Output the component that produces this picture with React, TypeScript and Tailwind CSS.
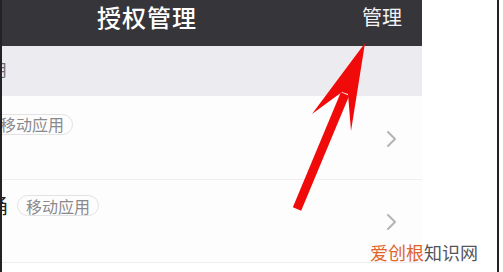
import React from "react";

const Chevron = () => (
  <svg width="11" height="18" viewBox="0 0 11 18" fill="none">
    <polyline points="2,2 9,9 2,16" stroke="#b4b4b8" strokeWidth="2" strokeLinecap="round" strokeLinejoin="round" />
  </svg>
);

const Pill = () => (
  <span className="inline-flex items-center h-[21px] px-[8px] rounded-full border border-[#e2e2e4] text-[16px] leading-none text-[#8a8a8e]">
    移动应用
  </span>
);

export default function App() {
  return (
    <div
      className="relative w-[503px] h-[272px] overflow-hidden bg-white flex"
      style={{ fontFamily: '"Noto Sans CJK SC", "Noto Sans", sans-serif' }}
    >
      <div className="w-[2px] h-full bg-[#222226]" />
      <div className="w-[420px] h-full flex flex-col overflow-hidden">
        <div className="h-[46px] bg-[#36353a] flex items-start pt-[5px] pl-[95px] pr-[20px]">
          <span className="text-[24px] leading-[24px] text-white font-medium tracking-[1px]">授权管理</span>
          <span className="ml-auto mt-[2px] text-[20px] leading-[20px] text-[#f2f2f2]">管理</span>
        </div>
        <div className="h-[50px] bg-[#ececf0] flex items-start pt-[15px]">
          <span className="-ml-[11px] text-[16px] leading-[16px] text-[#6a6a6e]">用</span>
        </div>
        <div className="h-[84px] bg-[#fdfdfd] border-b border-[#efeff1] flex items-center pr-[25px]">
          <div className="self-start pt-[16px] -ml-[11px]">
            <Pill />
          </div>
          <div className="ml-auto mt-[2px]">
            <Chevron />
          </div>
        </div>
        <div className="h-[83px] bg-[#fdfdfd] border-b border-[#efeff1] flex items-center pr-[25px]">
          <div className="self-start pt-[15px] -ml-[14px] flex items-center gap-[9px]">
            <span className="text-[20px] leading-[21px] text-[#222]">俑</span>
            <Pill />
          </div>
          <div className="ml-auto mt-[2px]">
            <Chevron />
          </div>
        </div>
        <div className="flex-1 bg-white" />
      </div>
      <div className="w-[75px] h-full bg-white" />
      <div className="w-[2px] h-full bg-[#222226]" />
      <div className="flex-1 h-full bg-white" />

      <svg className="absolute left-0 top-0" width="503" height="272" viewBox="0 0 503 272">
        <line x1="345" y1="94" x2="297" y2="209" stroke="#f00a0a" strokeWidth="9" />
        <polygon points="365,43 351,131 348,94 342,92 312,114" fill="#f00a0a" />
      </svg>

      <div className="absolute left-[370px] top-[241px] text-[18px] leading-[22px] whitespace-nowrap">
        <span className="text-[#e0652b]">爱创根</span>
        <span className="text-[#555558]">知识网</span>
      </div>
    </div>
  );
}
